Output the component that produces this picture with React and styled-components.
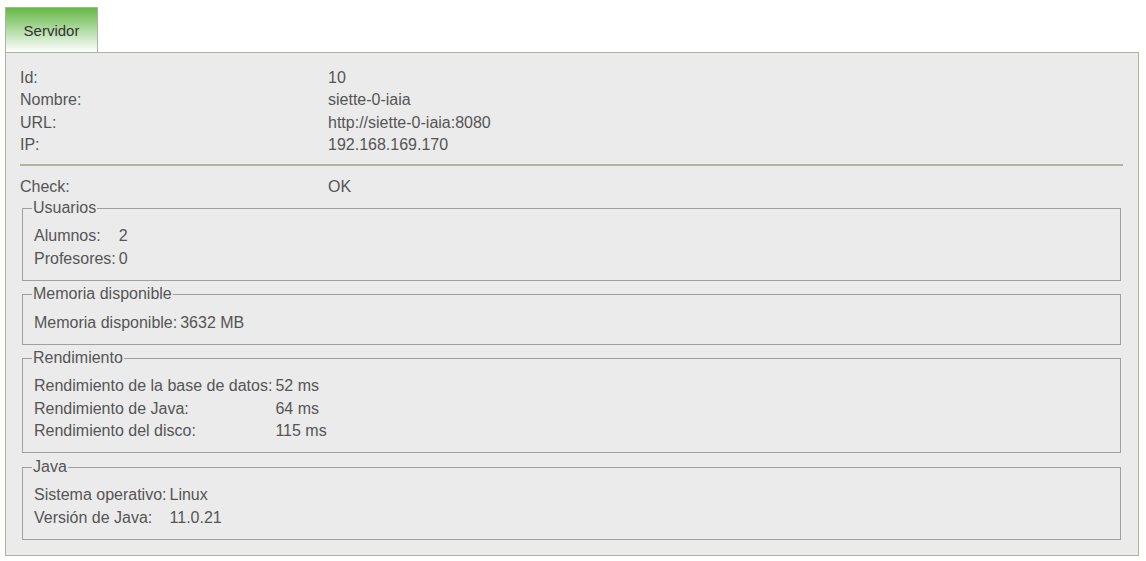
import React from "react";
import styled, { createGlobalStyle } from "styled-components";

const GlobalStyle = createGlobalStyle`
  html, body {
    margin: 0;
    padding: 0;
    background: #ffffff;
  }
  body {
    font-family: "Liberation Sans", Arial, Helvetica, sans-serif;
    font-size: 16px;
    line-height: 18.4px;
    color: #555555;
  }
`;

const Page = styled.div`
  padding: 7px 7px 6px 5px;
`;

const Tabs = styled.div`
  display: flex;
`;

const Tab = styled.div`
  width: 93px;
  height: 45px;
  box-sizing: border-box;
  border: 1px solid #b1b1a1;
  border-bottom: none;
  background: linear-gradient(to bottom, #66b846 0%, #a9d899 45%, #ffffff 100%);
  display: flex;
  align-items: center;
  justify-content: center;
  font-size: 15px;
  color: #333333;
  padding-top: 3px;
`;

const Panel = styled.div`
  border: 1px solid #b1b1a1;
  background: #ebebeb;
  padding: 13px 15px 15px 14px;
`;

const InfoTable = styled.table`
  border-collapse: separate;
  border-spacing: 0 2px;
`;

const Label = styled.td`
  padding: 1px ${(p) => (p.$wide ? "0" : "3px")} 1px 0;
  width: ${(p) => (p.$wide ? "308px" : "auto")};
  white-space: nowrap;
  vertical-align: top;
`;

const Value = styled.td`
  padding: 1px 0;
  white-space: nowrap;
  vertical-align: top;
`;

const Rule = styled.hr`
  border: none;
  height: 2px;
  background: #b3b3a3;
  margin: 6px 0 9px;
`;

const Group = styled.fieldset`
  margin: 0 2px;
  padding: 6.8px 12px 8.8px 11px;
  border: 1px solid #a0a0a0;
  & + & {
    margin-top: 4.5px;
  }
`;

const Legend = styled.legend`
  padding: 0 1px;
  margin-left: -2px;
`;

const Rows = ({ rows, wide }) => (
  <InfoTable>
    <tbody>
      {rows.map(([k, v]) => (
        <tr key={k}>
          <Label $wide={wide}>{k}</Label>
          <Value>{v}</Value>
        </tr>
      ))}
    </tbody>
  </InfoTable>
);

const groups = [
  {
    title: "Usuarios",
    rows: [
      ["Alumnos:", "2"],
      ["Profesores:", "0"],
    ],
  },
  {
    title: "Memoria disponible",
    rows: [["Memoria disponible:", "3632 MB"]],
  },
  {
    title: "Rendimiento",
    rows: [
      ["Rendimiento de la base de datos:", "52 ms"],
      ["Rendimiento de Java:", "64 ms"],
      ["Rendimiento del disco:", "115 ms"],
    ],
  },
  {
    title: "Java",
    rows: [
      ["Sistema operativo:", "Linux"],
      ["Versión de Java:", "11.0.21"],
    ],
  },
];

const App = () => {
  return (
    <Page>
      <GlobalStyle />
      <Tabs>
        <Tab>Servidor</Tab>
      </Tabs>
      <Panel>
        <Rows
          wide
          rows={[
            ["Id:", "10"],
            ["Nombre:", "siette-0-iaia"],
            ["URL:", "http://siette-0-iaia:8080"],
            ["IP:", "192.168.169.170"],
          ]}
        />
        <Rule />
        <Rows wide rows={[["Check:", "OK"]]} />
        {groups.map((g) => (
          <Group key={g.title}>
            <Legend>{g.title}</Legend>
            <Rows rows={g.rows} />
          </Group>
        ))}
      </Panel>
    </Page>
  );
};

export default App;
